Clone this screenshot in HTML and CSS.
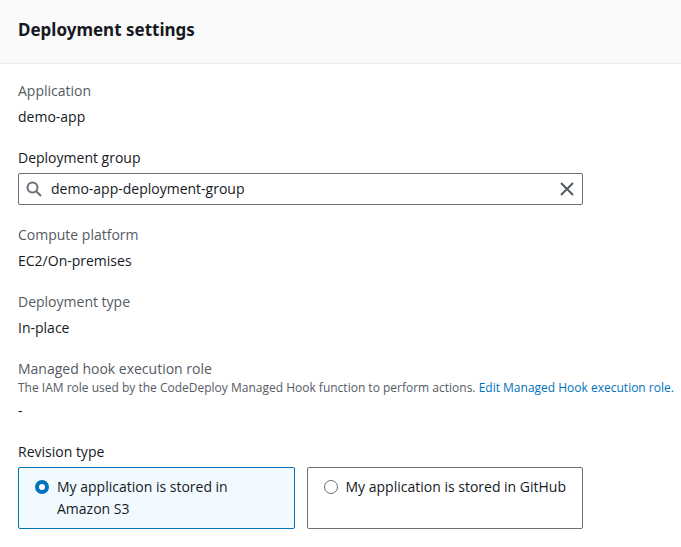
FILE: index.html
```html
<!DOCTYPE html>
<html lang="en">
<head>
<meta charset="utf-8">
<meta name="viewport" content="width=device-width, initial-scale=1">
<title>Deployment settings</title>
<link rel="stylesheet" href="styles.css">
</head>
<body>
<main class="panel">
  <header class="panel-header">
    <h1 class="panel-title">Deployment settings</h1>
  </header>
  <form class="panel-body">
    <div class="field">
      <div class="label label-muted">Application</div>
      <div class="value">demo-app</div>
    </div>
    <div class="field">
      <label class="label" for="group">Deployment group</label>
      <div class="search control">
        <svg class="search-icon" viewBox="0 0 16 16" aria-hidden="true"><circle cx="6.5" cy="6.5" r="5"/><path d="M10.2 10.2 15 15"/></svg>
        <input class="search-input" id="group" type="text" value="demo-app-deployment-group">
        <button class="clear" type="button" aria-label="Clear">
          <svg class="clear-icon" viewBox="0 0 16 16" aria-hidden="true"><path d="m2 2 12 12M14 2 2 14"/></svg>
        </button>
      </div>
    </div>
    <div class="field">
      <div class="label label-muted">Compute platform</div>
      <div class="value">EC2/On-premises</div>
    </div>
    <div class="field">
      <div class="label label-muted">Deployment type</div>
      <div class="value">In-place</div>
    </div>
    <div class="field">
      <div class="label-block">
        <div class="label label-muted">Managed hook execution role</div>
        <div class="hint">The IAM role used by the CodeDeploy Managed Hook function to perform actions. <a class="link" href="#role">Edit Managed Hook execution role.</a></div>
      </div>
      <div class="value">-</div>
    </div>
    <fieldset class="field">
      <legend class="label legend">Revision type</legend>
      <div class="tiles control">
        <label class="tile">
          <input class="radio" type="radio" name="revision" checked>
          <span>My application is stored in Amazon S3</span>
        </label>
        <label class="tile">
          <input class="radio" type="radio" name="revision">
          <span>My application is stored in GitHub</span>
        </label>
      </div>
    </fieldset>
  </form>
</main>
</body>
</html>
```
FILE: styles.css
```css
* {
  box-sizing: border-box;
}

body {
  margin: 0;
  background: #fff;
  color: #16191f;
  font: 14px/22px "Open Sans", "Noto Sans", sans-serif;
}

.panel-header {
  padding: 19px 18px 22px;
  background: #fafafa;
  border-bottom: 1px solid #eaeded;
}

.panel-title {
  margin: 0;
  font-family: "Noto Sans", "Open Sans", sans-serif;
  font-size: 17px;
  line-height: 22px;
  font-weight: 700;
}

.panel-body {
  display: flex;
  flex-direction: column;
  gap: 19px;
  padding: 16px 18px 18px;
}

.field {
  display: flex;
  flex-direction: column;
  gap: 4px;
  min-width: 0;
  margin: 0;
  padding: 0;
  border: 0;
}

.label-muted {
  color: #545b64;
}

.legend {
  padding: 0;
  margin-bottom: 4px;
}

.hint {
  color: #545b64;
  font-size: 12px;
  line-height: 16px;
  white-space: nowrap;
}

.link {
  color: #0073bb;
  text-decoration: none;
}

.control {
  margin-right: 80px;
}

.search {
  display: flex;
  align-items: center;
  height: 32px;
  padding: 0 7px;
  border: 1px solid #687078;
  border-radius: 2px;
}

.search-icon,
.clear-icon {
  display: block;
  flex: none;
  width: 16px;
  height: 16px;
  fill: none;
  stroke: #687078;
  stroke-width: 2;
}

.clear-icon {
  stroke: #545b64;
}

.search-input {
  flex: 1;
  min-width: 0;
  padding: 0 0 0 9px;
  border: 0;
  outline: 0;
  background: none;
  color: inherit;
  font: inherit;
}

.clear {
  padding: 0;
  border: 0;
  background: none;
}

.tiles {
  display: grid;
  grid-template-columns: 1fr 1fr;
  gap: 12px;
}

.tile {
  display: flex;
  align-items: flex-start;
  gap: 8px;
  padding: 8px 12px 8px 16px;
  border: 1px solid #687078;
  border-radius: 2px;
}

.tile:has(:checked) {
  border-color: #0073bb;
  background: #f1faff;
}

.radio {
  appearance: none;
  flex: none;
  width: 14px;
  height: 14px;
  margin: 4px 0;
  border: 1px solid #687078;
  border-radius: 50%;
  background: #fff;
}

.radio:checked {
  border: 4px solid #0073bb;
}
```
